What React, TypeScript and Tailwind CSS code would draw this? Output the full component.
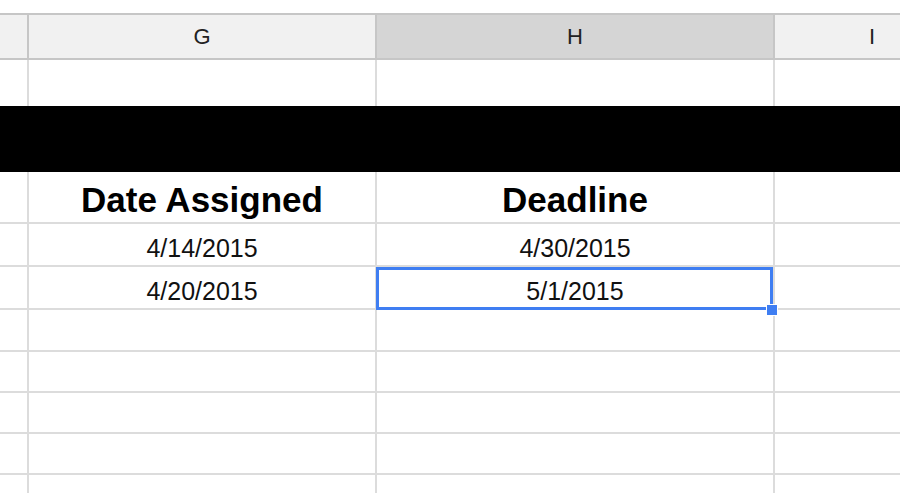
import React from "react";

const cols = "grid grid-cols-[29px_348px_398px_1fr]";
const font = { fontFamily: '"Liberation Sans", Arial, sans-serif' };

function BodyRow({
  h,
  g,
  hv,
  bold,
  selected,
}: {
  h: string;
  g?: string;
  hv?: string;
  bold?: boolean;
  selected?: boolean;
}) {
  const txt = bold
    ? "text-[35px] font-bold text-black pb-[5px]"
    : "text-[25px] text-[#111] pb-[4px]";
  return (
    <div className={`${cols} ${h}`}>
      <div className="border-r-2 border-b-2 border-[#dcdcdc] bg-white" />
      <div
        className={`border-r-2 border-b-2 border-[#dcdcdc] bg-white flex items-end justify-center leading-none ${txt}`}
      >
        {g}
      </div>
      <div
        className={`relative border-r-2 border-b-2 border-[#dcdcdc] bg-white flex items-end justify-center leading-none ${txt}`}
      >
        {hv}
        {selected && (
          <>
            <div className="absolute z-10 left-[-1px] top-0 w-[397px] h-[43px] border-[3px] border-[#3f7ef2]" />
            <div className="absolute z-20 right-[-5px] bottom-[-8px] w-[12px] h-[12px] bg-[#3f7ef2] border border-white" />
          </>
        )}
      </div>
      <div className="border-b-2 border-[#dcdcdc] bg-white" />
    </div>
  );
}

export default function App() {
  return (
    <div className="w-[900px] h-[493px] overflow-hidden bg-white" style={font}>
      <div className="h-[13px] bg-white" />
      {/* column header */}
      <div
        className={`${cols} h-[47px] border-t-2 border-b-2 border-[#c6c6c6] text-[22px] text-[#222]`}
      >
        <div className="bg-[#f1f1f1] border-r-2 border-[#c6c6c6]" />
        <div className="bg-[#f1f1f1] border-r-2 border-[#c6c6c6] flex items-center justify-center">
          G
        </div>
        <div className="bg-[#d5d5d5] border-r-2 border-[#c6c6c6] flex items-center justify-center">
          H
        </div>
        <div className="bg-[#f1f1f1] flex items-center justify-end pr-[25px]">
          I
        </div>
      </div>
      <div className={`${cols} h-[46px]`}>
        <div className="border-r-2 border-[#dcdcdc]" />
        <div className="border-r-2 border-[#dcdcdc]" />
        <div className="border-r-2 border-[#dcdcdc]" />
        <div />
      </div>
      <div className="h-[66px] bg-black" />
      <BodyRow h="h-[52px]" g="Date Assigned" hv="Deadline" bold />
      <BodyRow h="h-[43px]" g="4/14/2015" hv="4/30/2015" />
      <BodyRow h="h-[43px]" g="4/20/2015" hv="5/1/2015" selected />
      <BodyRow h="h-[42px]" />
      <BodyRow h="h-[41px]" />
      <BodyRow h="h-[41px]" />
      <BodyRow h="h-[41px]" />
      <BodyRow h="h-[41px]" />
    </div>
  );
}
